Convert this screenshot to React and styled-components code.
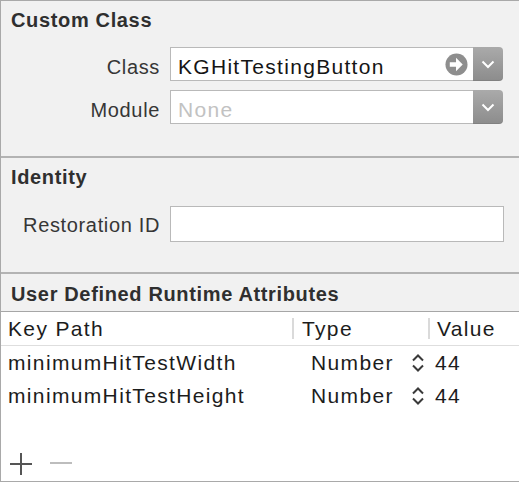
import React from 'react'
import styled, { createGlobalStyle } from 'styled-components'

const Global = createGlobalStyle`
  html, body { margin: 0; padding: 0; background: #f1f1f1; }
  body { font-family: "Liberation Sans", Arial, sans-serif; }
`

const Panel = styled.div`
  width: 519px;
  height: 482px;
  box-sizing: border-box;
  border-top: 1px solid #a9a9a9;
  border-left: 1px solid #a9a9a9;
  border-bottom: 1px solid #a9a9a9;
  background: #f1f1f1;
  display: flex;
  flex-direction: column;
  overflow: hidden;
`

const Section = styled.section`
  display: flex;
  flex-direction: column;
  padding: ${p => p.$pad};
  border-bottom: ${p => (p.$last ? 'none' : '2px solid #b3b3b3')};
  ${p => p.$grow && 'flex: 1; min-height: 0;'}
`

const Title = styled.h3`
  margin: 0 0 ${p => p.$gap}px;
  padding-left: 10px;
  font-size: 20px;
  line-height: 24px;
  font-weight: 700;
  letter-spacing: 0.65px;
  color: #2f2f2f;
`

const Rows = styled.div`
  display: flex;
  flex-direction: column;
  gap: 9px;
`

const Row = styled.div`
  display: grid;
  grid-template-columns: 159px 1fr;
  column-gap: 10px;
  align-items: center;
  padding-right: ${p => p.$right}px;
`

const Label = styled.div`
  padding-top: ${p => p.$drop || 0}px;
  text-align: right;
  font-size: 20px;
  letter-spacing: 0.65px;
  color: #363636;
`

const Combo = styled.div`
  display: flex;
  height: ${p => p.$h}px;
`

const Field = styled.div`
  flex: 1;
  display: flex;
  align-items: center;
  box-sizing: border-box;
  height: ${p => p.$h}px;
  padding: 0 5px 0 7px;
  background: #fff;
  border: 1px solid #b9b9b9;
  border-right: ${p => (p.$joined ? 'none' : '1px solid #b9b9b9')};
  font-size: 21px;
  letter-spacing: 1.3px;
  color: ${p => (p.$placeholder ? '#c2c2c2' : '#151515')};
  white-space: nowrap;
`

const FieldText = styled.span`
  flex: 1;
  padding-top: 5px;
`

const DropButton = styled.div`
  width: 30px;
  display: flex;
  align-items: center;
  justify-content: center;
  border-radius: 0 4px 4px 0;
  background: linear-gradient(#aaaaaa, #8c8c8c);
  box-shadow: inset 0 -1px 0 rgba(0, 0, 0, 0.08);
`

const Table = styled.div`
  flex: 1;
  display: flex;
  flex-direction: column;
  background: #fff;
  border-top: 1px solid #a6a6a6;
`

const Grid = styled.div`
  display: grid;
  grid-template-columns: 291px 136px 1fr;
  align-items: center;
  height: ${p => p.$h}px;
  border-bottom: ${p => (p.$head ? '1px solid #dedede' : 'none')};
  font-size: 21px;
  letter-spacing: 1.35px;
  color: #1c1c1c;
  white-space: nowrap;
`

const Cell = styled.div`
  display: flex;
  align-items: center;
  padding-left: ${p => p.$pl}px;
  padding-right: ${p => p.$pr || 0}px;
`

const Divider = styled.span`
  width: 2px;
  height: 21px;
  background: #dadada;
  margin-right: ${p => p.$gap}px;
`

const Stepper = styled.svg`
  margin-left: auto;
  flex: none;
`

const Footer = styled.div`
  margin-top: auto;
  height: 34px;
  display: flex;
  align-items: center;
  gap: 18px;
  padding-left: 9px;
`

const Chevron = () => (
  <svg width="14" height="9" viewBox="0 0 14 9">
    <polyline points="1.5,1.5 7,7 12.5,1.5" fill="none" stroke="#fff" strokeWidth="2" />
  </svg>
)

const GoArrow = () => (
  <svg width="23" height="23" viewBox="0 0 24 24">
    <circle cx="12" cy="12" r="11.5" fill="#8e8e8e" />
    <path d="M5 9.6 H11.5 V5 L18.5 12 L11.5 19 V14.4 H5 Z" fill="#fff" />
  </svg>
)

const UpDown = () => (
  <Stepper width="12" height="20" viewBox="0 0 12 20">
    <polyline points="1,7.5 6,2.5 11,7.5" fill="none" stroke="#3a3a3a" strokeWidth="2" />
    <polyline points="1,12.5 6,17.5 11,12.5" fill="none" stroke="#3a3a3a" strokeWidth="2" />
  </Stepper>
)

const attributes = [
  { key: 'minimumHitTestWidth', type: 'Number', value: '44' },
  { key: 'minimumHitTestHeight', type: 'Number', value: '44' },
]

export default function App() {
  return (
    <>
      <Global />
      <Panel>
        <Section $pad="7px 0 32px">
          <Title $gap={15}>Custom Class</Title>
          <Rows>
            <Row $right={16}>
              <Label $drop={6}>Class</Label>
              <Combo $h={34}>
                <Field $h={34} $joined>
                  <FieldText>KGHitTestingButton</FieldText>
                  <GoArrow />
                </Field>
                <DropButton><Chevron /></DropButton>
              </Combo>
            </Row>
            <Row $right={16}>
              <Label $drop={7}>Module</Label>
              <Combo $h={34}>
                <Field $h={34} $joined $placeholder>
                  <FieldText>None</FieldText>
                </Field>
                <DropButton><Chevron /></DropButton>
              </Combo>
            </Row>
          </Rows>
        </Section>

        <Section $pad="7px 0 30px">
          <Title $gap={17}>Identity</Title>
          <Row $right={15}>
            <Label $drop={3}>Restoration ID</Label>
            <Field $h={36} />
          </Row>
        </Section>

        <Section $pad="8px 0 0" $last $grow>
          <Title $gap={5}>User Defined Runtime Attributes</Title>
          <Table>
            <Grid $h={33} $head>
              <Cell $pl={7}>Key Path</Cell>
              <Cell $pl={0}><Divider $gap={8} />Type</Cell>
              <Cell $pl={0}><Divider $gap={7} />Value</Cell>
            </Grid>
            {attributes.map(a => (
              <Grid $h={33} key={a.key}>
                <Cell $pl={7}>{a.key}</Cell>
                <Cell $pl={19} $pr={4}>{a.type}<UpDown /></Cell>
                <Cell $pl={7}>{a.value}</Cell>
              </Grid>
            ))}
            <Footer>
              <svg width="22" height="22" viewBox="0 0 22 22">
                <path d="M11 0 V22 M0 11 H22" stroke="#555" strokeWidth="2" />
              </svg>
              <svg width="22" height="22" viewBox="0 0 22 22">
                <path d="M0 10 H22" stroke="#bdbdbd" strokeWidth="2" />
              </svg>
            </Footer>
          </Table>
        </Section>
      </Panel>
    </>
  )
}
